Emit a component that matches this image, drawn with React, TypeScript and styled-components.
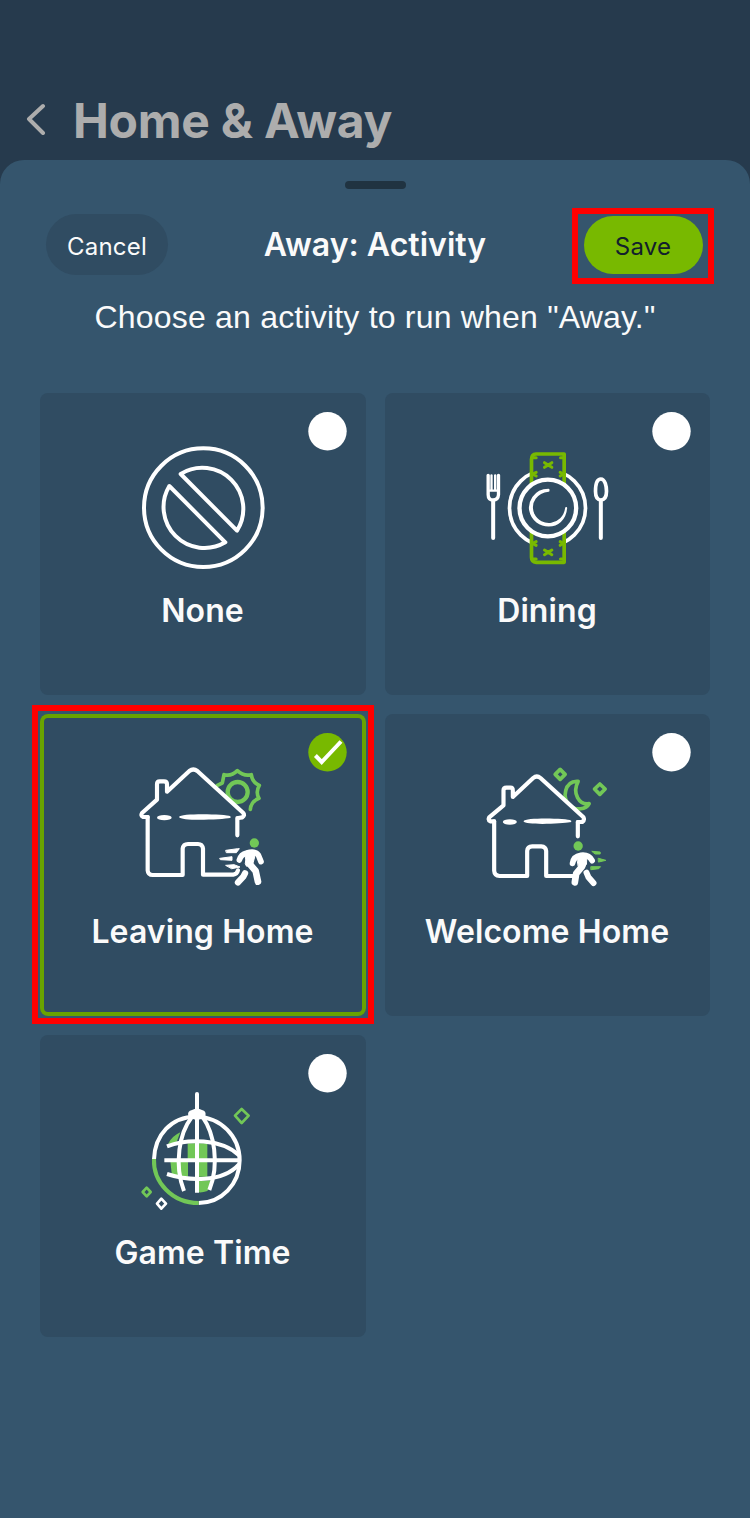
import React from "react";
import styled, { createGlobalStyle } from "styled-components";

const CARD = "#304c62";
const LIME = "#78b900";
const LEAF = "#72c757";

const GlobalStyle = createGlobalStyle`
  *, *::before, *::after { box-sizing: border-box; }
  body { margin: 0; background: #263a4d; }
  button { font: inherit; border: 0; padding: 0; margin: 0; }
`;

const Screen = styled.div`
  width: 750px;
  height: 1518px;
  display: flex;
  flex-direction: column;
  overflow: hidden;
  background: #263a4d;
  font-family: Inter, "Liberation Sans", sans-serif;
  color: #fafafa;
`;

const PageHeader = styled.header`
  flex: none;
  height: 160px;
  padding: 80px 0 0 26px;
  display: flex;
  align-items: center;
  color: #adadad;
`;

const BackIcon = styled.svg`
  width: 20px;
  height: 32px;
  margin: 0 28px 2px 0;
  fill: none;
  stroke: currentColor;
  stroke-width: 4;
  stroke-linecap: round;
  stroke-linejoin: round;
`;

const PageTitle = styled.h1`
  margin: 1px 0 0 -1px;
  font-size: 48px;
  line-height: 60px;
  font-weight: 700;
  letter-spacing: -0.25px;
`;

const Sheet = styled.main`
  flex: 1;
  display: flex;
  flex-direction: column;
  border-radius: 24px 24px 0 0;
  background: #35556d;
`;

const Handle = styled.div`
  width: 61px;
  height: 8px;
  margin: 21px auto 0;
  border-radius: 4px;
  background: #203341;
`;

const Toolbar = styled.div`
  display: flex;
  justify-content: space-between;
  align-items: center;
  height: 76px;
  margin-top: 19px;
  padding: 0 36px 0 46px;
`;

const Pill = styled.button<{ $primary?: boolean }>`
  width: ${(p) => (p.$primary ? 119 : 122)}px;
  height: ${(p) => (p.$primary ? 58 : 61)}px;
  margin-bottom: ${(p) => (p.$primary ? 0 : 3)}px;
  padding-top: 4px;
  border-radius: 31px;
  background: ${(p) => (p.$primary ? LIME : CARD)};
  color: ${(p) => (p.$primary ? "#12202c" : "#fafafa")};
  font-size: 24px;
  letter-spacing: 0.2px;
`;

const SaveFrame = styled.div`
  width: 142px;
  height: 76px;
  border: 6px solid #ff0000;
  display: flex;
  align-items: center;
  justify-content: center;
  padding-bottom: 3px;
`;

const SheetTitle = styled.h2`
  margin: 0 0 2px 10px;
  font-size: 32px;
  line-height: 40px;
  font-weight: 600;
  letter-spacing: 0.03px;
`;

const Prompt = styled.p`
  margin: 13px 0 0;
  text-align: center;
  font-family: "Liberation Sans", Arial, sans-serif;
  font-size: 32px;
  line-height: 40px;
  letter-spacing: 0.2px;
`;

const Grid = styled.div`
  display: grid;
  grid-template-columns: 326px 325px;
  grid-auto-rows: 302px;
  gap: 19px;
  margin: 56px 40px 0;
`;

const Card = styled.div<{ $selected?: boolean }>`
  position: relative;
  display: flex;
  flex-direction: column;
  align-items: center;
  padding-top: 37px;
  border-radius: 8px;
  background: ${CARD};
  box-shadow: ${(p) => (p.$selected ? "inset 0 0 0 4px #69a300" : "none")};
`;

const HighlightFrame = styled.div`
  position: absolute;
  inset: -9px -8px -8px -8px;
  border: 6px solid #ff0000;
`;

const Radio = styled.svg`
  position: absolute;
  top: 19px;
  right: 19px;
  width: 39px;
  height: 39px;
`;

const Art = styled.svg`
  flex: none;
  width: 150px;
  height: 150px;
  fill: none;
  stroke-linecap: round;
  stroke-linejoin: round;
`;

const Label = styled.div`
  margin: 10px 1px 0 0;
  font-size: 32px;
  line-height: 42px;
  font-weight: 600;
  letter-spacing: 0.09px;
  white-space: nowrap;
`;

const NoneArt = () => (
  <Art viewBox="-6 0 450 450" stroke="#fff" strokeWidth="12">
    <circle cx="220" cy="233" r="178" />
    <path d="M152 132A123 123 0 0 1 321 302Z" />
    <path d="M118 168A123 123 0 0 0 286 337Z" />
  </Art>
);

const Bow = ({ x, y }: { x: number; y: number }) => (
  <g transform={`translate(${x} ${y})`} stroke={LIME} strokeWidth="9">
    <path d="M-11-7L0 0L-11 7M11-7L0 0L11 7" />
  </g>
);

const DiningArt = () => (
  <Art viewBox="7.5 0 450 450" stroke="#fff" strokeWidth="11">
    <circle cx="231" cy="234" r="114" />
    <path d="M197 72H281V397H197Q183 396 183 382V88Q183 73 197 72Z" fill={CARD} stroke={LIME} strokeWidth="11" />
    <g stroke={LIME} strokeWidth="9">
      <path d="M188 83H197M276 83H270M188 387H197M276 387H270" />
      <path d="M186 132L197 127M186 132L197 138M278 132L269 127M278 132L269 138" />
      <path d="M186 340L197 335M186 340L197 346M278 340L269 335M278 340L269 346" />
    </g>
    <Bow x={233} y={105} />
    <Bow x={233} y={367} />
    <circle cx="232" cy="234" r="85" fill={CARD} strokeWidth="13" />
    <path d="M234 179C189 179 175 221 179 241C190 300 281 306 287 234C279 290 210 298 188 251C175 215 199 186 234 182Z" fill="#fff" strokeWidth="6" />
    <path d="M53 136V194Q53 210 68 210T84 194V136" strokeWidth="10" />
    <path d="M63 136V182M74 136V182M57 182H80" strokeWidth="7" />
    <path d="M68 212V324M391 214V324" strokeWidth="12" />
    <path d="M391 147C378 147 375 170 375 184C375 203 381 210 391 210S408 203 408 184C408 170 404 147 391 147Z" strokeWidth="11" />
  </Art>
);

const LeavingArt = () => (
  <Art viewBox="-6 -12 450 450" stroke="#fff" strokeWidth="12.5">
    <g stroke={LEAF} strokeWidth="11">
      <path d="M262 91L277 84L282 59Q304 65 322 47Q342 65 364 59Q366 82 388 91Q376 111 387 130Q363 139 361 163" />
      <circle cx="323" cy="111" r="30" strokeWidth="13" />
    </g>
    <path d="M53 186H39Q31 182 36 174L81 134V88Q81 79 89 79H102Q111 79 111 88V110L178 48Q190 39 202 48L340 174Q345 181 337 187L325 189" fill={CARD} />
    <path d="M53 186V346Q54 360 68 360H158V281Q160 267 174 267H204Q217 267 219 281V359H310Q321 358 324 346M322 189V241" />
    <ellipse cx="103" cy="188" rx="22" ry="8" fill="#fff" stroke="none" />
    <path d="M147 186C150 174 288 177 301 184C303 187 302 188 300 189C280 193 153 200 147 186Z" fill="#fff" stroke="none" />
    <path d="M288 286L323 281L328 281L319 293H290ZM270 310L306 305V316L272 314ZM288 331L312 329L330 336L306 341Z" fill="#fff" strokeWidth="3" />
    <circle cx="373" cy="264" r="14" fill={LEAF} stroke="none" />
    <path d="M328 315Q333 298 350 294Q376 287 385 300L393 320" strokeWidth="17" />
    <path d="M363 302L358 326L377 348L384 380" strokeWidth="20" />
    <path d="M345 292H378L368 328L350 334Q343 328 347 316Z" fill="#fff" strokeWidth="3" />
    <path d="M345 355L340 365L324 382" strokeWidth="19" />
  </Art>
);

const WelcomeArt = () => (
  <Art viewBox="-7.5 -12 450 450" stroke="#fff" strokeWidth="12.5">
    <g stroke={LEAF} strokeWidth="11">
      <path d="M254 43L269 58L254 73L239 58ZM373 87L389 102L373 118L357 102Z" />
      <path d="M304 79C267 80 260 128 281 149C300 170 333 162 341 146C311 151 289 115 308 79Z" />
    </g>
    <path d="M56 199H45Q37 195 41 187L84 151V106Q84 98 93 98H105Q112 98 112 107V126L173 69Q184 60 195 69L324 187Q328 195 320 201H307" fill={CARD} />
    <path d="M56 199V347Q57 362 72 363H155V288Q156 274 170 274H197Q211 275 212 288V363H296M307 201V244" />
    <ellipse cx="103" cy="201" rx="21" ry="8" fill="#fff" stroke="none" />
    <path d="M144 199C148 187 275 190 287 197C289 200 285 202 282 202C265 206 149 212 144 199Z" fill="#fff" stroke="none" />
    <path d="M350 289L374 291V297L360 297ZM369 310L391 316L370 321ZM347 335L375 335L370 341L347 344Z" fill={LEAF} stroke={LEAF} strokeWidth="3" />
    <circle cx="308" cy="273" r="14" fill={LEAF} stroke="none" />
    <path d="M291 325Q294 304 316 301Q340 298 350 317" strokeWidth="17" />
    <path d="M317 305L320 334L302 356L298 382" strokeWidth="20" />
    <path d="M304 302L334 300L333 327L326 338L309 334Z" fill="#fff" strokeWidth="3" />
    <path d="M333 353L339 367L354 384" strokeWidth="18" />
  </Art>
);

const GameArt = () => (
  <Art viewBox="-6 -24 450 450" stroke="#fff" strokeWidth="12">
    <path d="M151 157L139 188L114 192Q126 168 151 157ZM173 190H232V244H173ZM121 244H145L149 291L126 288ZM147 244H174V290H150ZM202 244H232V290H202ZM207 302L243 301Q239 326 232 333Q218 338 207 337Z" fill={LEAF} stroke="none" />
    <path d="M72 238C74 165 124 110 197 110C273 110 329 170 329 241C329 313 274 369 206 369" strokeLinecap="butt" />
    <path d="M72 237C69 305 125 369 206 369" stroke={LEAF} strokeLinecap="butt" />
    <path d="M201 90V338M103 241H325" strokeLinecap="butt" />
    <path d="M201 42V95" />
    <path d="M184 113C149 158 131 251 162 333M219 113C251 158 270 251 238 330" strokeLinecap="butt" />
    <path d="M111 199C170 176 273 174 327 226M111 282C172 302 276 310 327 253" strokeLinecap="butt" />
    <path d="M175 109Q171 92 186 90Q201 82 216 90Q230 92 226 109Q221 115 214 116L201 121L187 116Q179 115 175 109Z" fill="#fff" stroke="none" />
    <path d="M335 87L356 107L335 129L315 107ZM50 323L62 336L50 349L38 336Z" stroke={LEAF} strokeWidth="8" />
    <path d="M94 356L108 371L94 386L81 371Z" strokeWidth="8" />
  </Art>
);

type Activity = { name: string; art: () => React.JSX.Element; selected?: boolean };

const activities: Activity[] = [
  { name: "None", art: NoneArt },
  { name: "Dining", art: DiningArt },
  { name: "Leaving Home", art: LeavingArt, selected: true },
  { name: "Welcome Home", art: WelcomeArt },
  { name: "Game Time", art: GameArt },
];

const SelectionMark = ({ selected }: { selected?: boolean }) => (
  <Radio viewBox="0 0 39 39">
    <circle cx="19.5" cy="19.3" r="19.2" fill={selected ? LIME : "#fff"} />
    {selected && <path d="M7.4 22.5L13.7 29L33 8.5" fill="none" stroke="#fff" strokeWidth="4" />}
  </Radio>
);

export default function App() {
  return (
    <Screen>
      <GlobalStyle />
      <PageHeader>
        <BackIcon viewBox="0 0 20 32">
          <path d="M17 3L3 16L17 30" />
        </BackIcon>
        <PageTitle>Home &amp; Away</PageTitle>
      </PageHeader>
      <Sheet>
        <Handle />
        <Toolbar>
          <Pill>Cancel</Pill>
          <SheetTitle>Away: Activity</SheetTitle>
          <SaveFrame>
            <Pill $primary>Save</Pill>
          </SaveFrame>
        </Toolbar>
        <Prompt>Choose an activity to run when "Away."</Prompt>
        <Grid>
          {activities.map(({ name, art: Icon, selected }) => (
            <Card key={name} $selected={selected}>
              <Icon />
              <Label>{name}</Label>
              <SelectionMark selected={selected} />
              {selected && <HighlightFrame />}
            </Card>
          ))}
        </Grid>
      </Sheet>
    </Screen>
  );
}
